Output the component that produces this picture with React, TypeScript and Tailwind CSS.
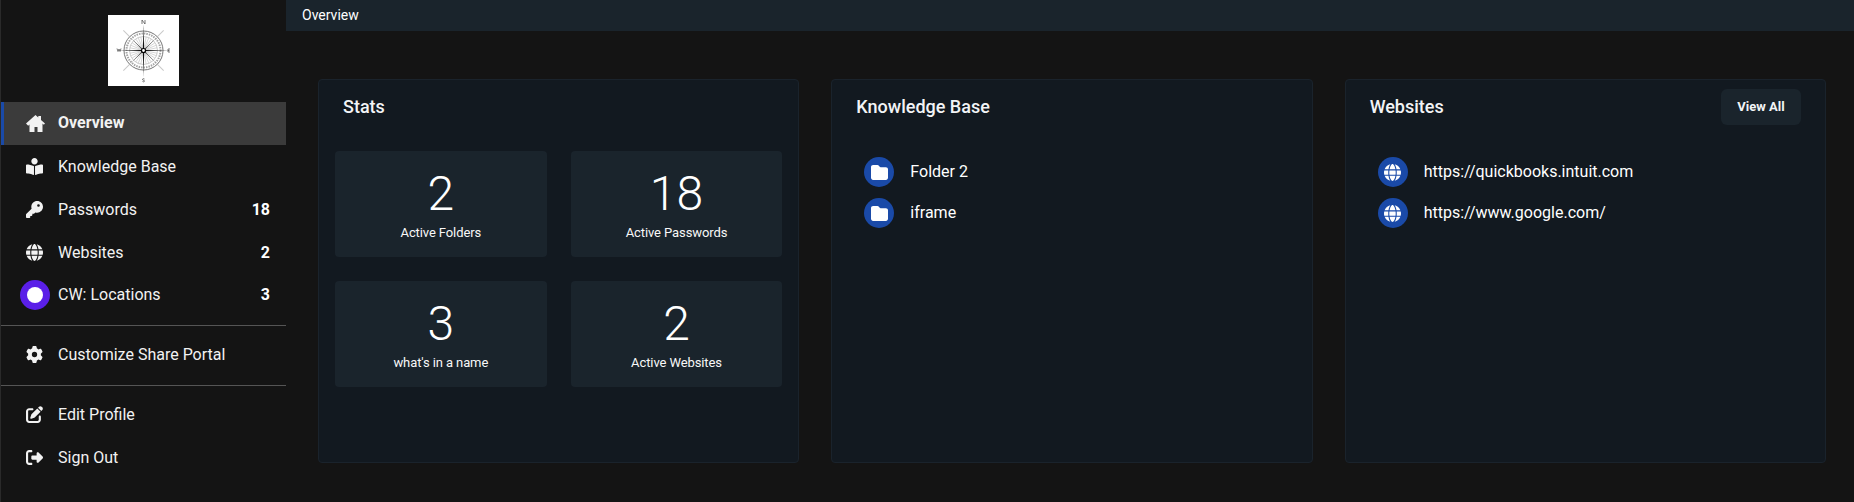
import type { ReactNode } from 'react'
import { FaBookReader } from 'react-icons/fa'
import { FaFolder, FaGear, FaGlobe, FaKey, FaPenToSquare, FaRightFromBracket } from 'react-icons/fa6'

function HomeIcon() {
  return (
    <svg viewBox="0 0 19 17" className="w-[19px] h-[17px] fill-current">
      <path d="M9.500 0l2.800 2.500V1h2.700v3.900l4 3.500-1.200 1.300-1.300-1.100V17h-5v-5h-3v5h-5V9.600l-1.300 1.100L0 8.400z" />
    </svg>
  )
}

function CompassLogo() {
  const spokes = [0, 45, 90, 135, 180, 225, 270, 315]
  const ticks = Array.from({ length: 32 }, (_, i) => i * 11.25)
  return (
    <svg viewBox="0 0 71 71" className="w-[71px] h-[71px]">
      <rect width="71" height="71" fill="#fff" />
      {spokes.filter((a) => a % 90 !== 0).map((a) => (
        <line key={a} x1="35.5" y1="35.5" x2="35.5" y2="7" stroke="#c8c8c8" strokeWidth="1" transform={`rotate(${a} 35.5 35.5)`} />
      ))}
      <circle cx="35.5" cy="35.5" r="19.5" fill="#fff" stroke="#777" strokeWidth="1" />
      <circle cx="35.5" cy="35.5" r="17" fill="none" stroke="#a5a5a5" strokeWidth="2" strokeDasharray="1.500 1" />
      <circle cx="35.500" cy="35.500" r="14" fill="none" stroke="#bbb" strokeWidth="0.8" />
      {ticks.map((a) => (
        <line key={a} x1="35.5" y1="35.5" x2="35.5" y2="22" stroke="#b5b5b5" strokeWidth="0.5" transform={`rotate(${a} 35.5 35.5)`} />
      ))}
      {spokes.map((a) => (
        <polygon
          key={a}
          points={a % 90 === 0 ? '35.5,35.5 34.9,33 35.5,9 36.1,33' : '35.5,35.5 35,33 35.5,17 36,33'}
          fill={a % 90 === 0 ? '#111' : '#444'}
          transform={`rotate(${a} 35.5 35.5)`}
        />
      ))}
      <circle cx="35.5" cy="35.5" r="2" fill="#fff" stroke="#000" strokeWidth="1.2" />
      <path d="M34 9V5l3 4V5M34.500 66.500c.6.5 2 .5 2-.5s-2-.5-2-1.500 1.400-1 2-.5M9 33.500l1 3 1-2.500 1 2.500 1-3M62 34h-2v3h2M60 35.500h1.500" fill="none" stroke="#444" strokeWidth="0.7" />
    </svg>
  )
}

function NavRow({ icon, label, count, active }: { icon: ReactNode; label: string; count?: number; active?: boolean }) {
  return (
    <div className={`h-[43px] flex items-center pr-[16px] border-l-[3px] ${active ? 'pb-[1px] bg-[#3b3b3b] border-[#1a4aa8] font-bold' : 'border-transparent'}`}>
      <span className="w-[54px] pl-[22px] shrink-0 flex items-center text-[17px] text-[#f2f2f2]">{icon}</span>
      <span className="flex-1 text-[16px] text-[#f2f2f2]">{label}</span>
      {count !== undefined && <span className="text-[16px] font-bold text-white">{count}</span>}
    </div>
  )
}

function Panel({ title, action, children }: { title: string; action?: ReactNode; children: ReactNode }) {
  return (
    <div className="h-[384px] bg-[#121920] border border-[#1a232c] rounded-[4px]">
      <div className="h-[54px] pl-[24px] pr-[24px] flex items-center justify-between">
        <h3 className="text-[18px] font-medium leading-[26px] text-[#f2f4f6]">{title}</h3>
        {action}
      </div>
      {children}
    </div>
  )
}

function Tile({ value, label }: { value: number; label: string }) {
  return (
    <div className="h-[106px] bg-[#1a242c] rounded-[4px] flex flex-col items-center">
      <div className="mt-[15px] text-[48px] leading-[56px] font-light text-white">{value}</div>
      <div className="mt-[2px] text-[13px] leading-[18px] tracking-[-0.1px] text-[#f8f8f8]">{label}</div>
    </div>
  )
}

function LinkRow({ icon, label }: { icon: ReactNode; label: string }) {
  return (
    <div className="h-[30px] flex items-center">
      <span className="w-[30px] h-[30px] rounded-full bg-[#1a4aa8] flex items-center justify-center text-white text-[17px]">{icon}</span>
      <span className="ml-[16px] text-[16px] text-white">{label}</span>
    </div>
  )
}

export default function App() {
  return (
    <div className="w-[1854px] h-[502px] overflow-hidden flex bg-[#141414] font-['Roboto',sans-serif]">
      <aside className="w-[286px] shrink-0 border-l border-[#2a2a2a]">
        <div className="h-[102px] pt-[15px] flex justify-center">
          <CompassLogo />
        </div>
        <NavRow active icon={<HomeIcon />} label="Overview" />
        <NavRow icon={<FaBookReader />} label="Knowledge Base" />
        <NavRow icon={<FaKey />} label="Passwords" count={18} />
        <NavRow icon={<FaGlobe />} label="Websites" count={2} />
        <div className="h-[43px] -mt-[1px] flex items-center pr-[16px] border-l-[3px] border-transparent">
          <span className="w-[54px] pl-[16px] shrink-0">
            <span className="w-[30px] h-[30px] rounded-full bg-[#5a1fe8] flex items-center justify-center">
              <span className="w-[16px] h-[16px] rounded-full bg-white" />
            </span>
          </span>
          <span className="flex-1 text-[16px] text-[#f2f2f2]">CW: Locations</span>
          <span className="text-[16px] font-bold text-white">3</span>
        </div>
        <div className="mt-[9px] border-t border-[#555]" />
        <div className="pt-[7px] pb-[9px]">
          <NavRow icon={<FaGear />} label="Customize Share Portal" />
        </div>
        <div className="border-t border-[#555]" />
        <div className="pt-[7px]">
          <NavRow icon={<FaPenToSquare />} label="Edit Profile" />
          <NavRow icon={<FaRightFromBracket />} label="Sign Out" />
        </div>
      </aside>
      <main className="flex-1 min-w-0">
        <div className="h-[31px] bg-[#1a242c] pl-[16px] flex items-center text-[14px] text-white">Overview</div>
        <div className="pt-[48px] pl-[32px] pr-[28px] grid grid-cols-3 gap-[32px]">
          <Panel title="Stats">
            <div className="px-[16px] pt-[17px] grid grid-cols-2 gap-x-[24px] gap-y-[24px]">
              <Tile value={2} label="Active Folders" />
              <Tile value={18} label="Active Passwords" />
              <Tile value={3} label="what's in a name" />
              <Tile value={2} label="Active Websites" />
            </div>
          </Panel>
          <Panel title="Knowledge Base">
            <div className="pl-[32px] pt-[23px] flex flex-col gap-[11px]">
              <LinkRow icon={<FaFolder />} label="Folder 2" />
              <LinkRow icon={<FaFolder />} label="iframe" />
            </div>
          </Panel>
          <Panel
            title="Websites"
            action={<button className="w-[80px] h-[36px] rounded-[6px] bg-[#1a242c] text-[13px] font-bold text-[#f2f4f6]">View All</button>}
          >
            <div className="pl-[32px] pt-[23px] flex flex-col gap-[11px]">
              <LinkRow icon={<FaGlobe />} label="https://quickbooks.intuit.com" />
              <LinkRow icon={<FaGlobe />} label="https://www.google.com/" />
            </div>
          </Panel>
        </div>
      </main>
    </div>
  )
}
